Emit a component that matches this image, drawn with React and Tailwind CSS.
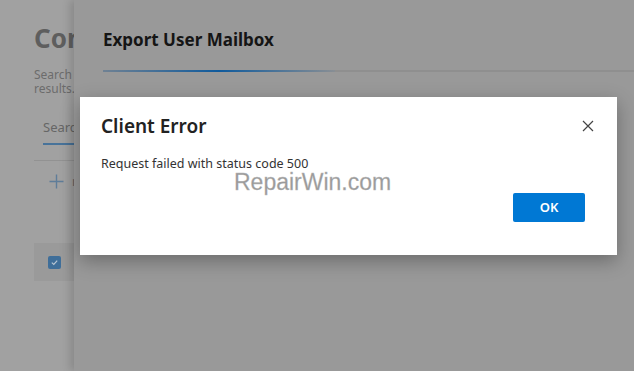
import React from "react";

export default function App() {
  const font = { fontFamily: '"Noto Sans", "Open Sans", sans-serif' };
  return (
    <div className="relative flex w-[634px] h-[371px] overflow-hidden bg-[#a1a1a1]" style={font}>
      {/* left page (dimmed) */}
      <div className="w-[74px] shrink-0 pl-[34px] pt-[22px] overflow-hidden">
        <div className="text-[26px] font-bold leading-[32px] text-[#5e5e5e] whitespace-nowrap">Con</div>
        <div className="mt-[14px] text-[12px] leading-[14px] text-[#6c6c6c] whitespace-nowrap">
          Search
          <br />
          results.
        </div>
        <div className="mt-[22px] pl-[9px] text-[13px] leading-[18px] text-[#666] whitespace-nowrap">Search</div>
        <div className="mt-[7px] ml-[9px] h-[2px] bg-[#48739a]" />
        <div className="mt-[15px] h-px bg-[#929292]" />
        <div className="mt-[11px] h-[18px] pl-[15px] flex items-center gap-[8px] whitespace-nowrap">
          <svg width="15" height="15" viewBox="0 0 15 15" className="shrink-0">
            <path d="M7.5 0.5 V14.5 M0.5 7.5 H14.5" stroke="#5f7d99" strokeWidth="1.4" />
          </svg>
          <span className="shrink-0 text-[13px] leading-[18px] text-[#666]">n</span>
        </div>
        <div className="mt-[53px] h-[38px] bg-[#9a9a9a] flex items-center pl-[14px]">
          <div className="w-[13px] h-[13px] rounded-[2px] bg-[#3f6e99] flex items-center justify-center">
            <svg width="9" height="9" viewBox="0 0 10 10">
              <path d="M2 5.2 L4.2 7.2 L8 2.8" fill="none" stroke="#b9c7d4" strokeWidth="1.3" />
            </svg>
          </div>
        </div>
      </div>

      {/* flyout panel */}
      <div className="relative flex-1 bg-[#999999] shadow-[-4px_0_8px_rgba(0,0,0,0.15)] pl-[29px] pt-[29px]">
        <div className="text-[17px] font-bold leading-[22px] text-[#151515] whitespace-nowrap">Export User Mailbox</div>
        <div className="mt-[19px] h-[2px] bg-[#8f8f8f] relative">
          <div className="absolute left-0 top-0 h-[2px] w-[232px] bg-[linear-gradient(90deg,rgba(90,120,150,0.6),#0f5a9c_50%,rgba(120,140,160,0.3))]" />
        </div>
      </div>

      {/* dialog */}
      <div className="absolute left-[80px] top-[97px] w-[537px] h-[158px] bg-white shadow-[0_6px_18px_rgba(0,0,0,0.3)] px-[21px] pt-[17px]">
        <div className="flex items-start justify-between">
          <div className="text-[19px] font-semibold leading-[24px] text-[#222]">Client Error</div>
          <svg width="12" height="12" viewBox="0 0 12 12" className="mt-[6px] mr-[2px]">
            <path d="M1 1 L11 11 M11 1 L1 11" stroke="#444" strokeWidth="1.2" />
          </svg>
        </div>
        <div className="mt-[17px] text-[12.5px] leading-[18px] text-[#333]">Request failed with status code 500</div>
        <div className="absolute left-[154px] top-[71px] text-[23px] leading-[28px] text-[#9a9a9a] [-webkit-text-stroke:0.3px_#bbb]" style={{ fontFamily: '"Liberation Sans", Arial, sans-serif' }}>
          RepairWin.com
        </div>
        <div className="flex justify-end mt-[7px] pr-[11px]">
          <button className="mt-[13px] w-[72px] h-[29px] bg-[#0078d4] rounded-[2px] text-white text-[13px] font-semibold">OK</button>
        </div>
      </div>
    </div>
  );
}
